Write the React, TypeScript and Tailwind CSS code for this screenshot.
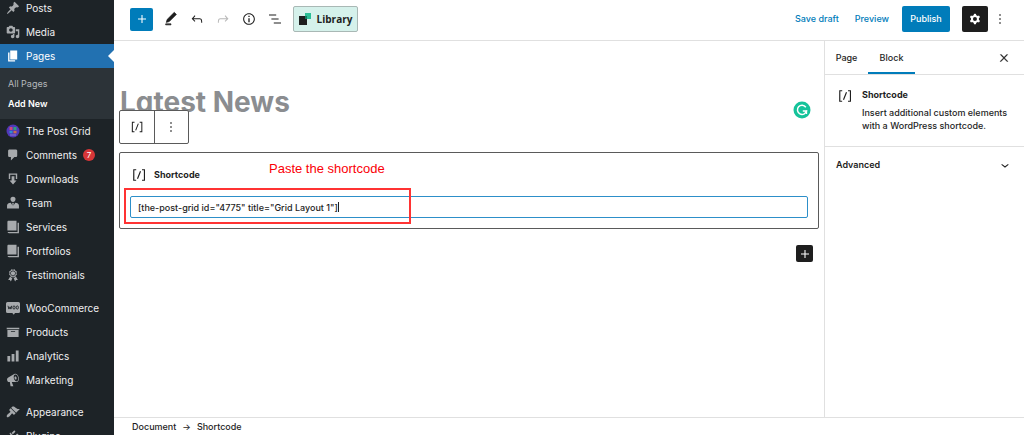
import type { ReactNode } from 'react';
import clsx from 'clsx';

const dashicons = {
  post: 'M10.44 3.02l1.82-1.82 6.36 6.35-1.83 1.82c-1.05-.68-2.48-.57-3.41.36l-.75.75c-.92.93-1.04 2.35-.35 3.41l-1.83 1.82-2.41-2.41-2.8 2.79c-.42.42-3.38 2.71-3.8 2.29s1.86-3.39 2.28-3.81l2.79-2.79L4.1 9.36l1.83-1.82c1.05.69 2.48.57 3.4-.36l.75-.75c.93-.92 1.05-2.35.36-3.41z',
  media: 'M13 11V4c0-.55-.45-1-1-1h-1.67L9 1H5L3.67 3H2c-.55 0-1 .45-1 1v7c0 .55.45 1 1 1h10c.55 0 1-.45 1-1zM7 4.5c1.38 0 2.5 1.12 2.5 2.5S8.38 9.5 7 9.5 4.5 8.38 4.5 7 5.62 4.5 7 4.5zM14 6h5v10.5c0 1.38-1.12 2.5-2.5 2.5S14 17.88 14 16.5s1.12-2.5 2.5-2.5c.17 0 .34.02.5.05V9h-3V6zm-4 8.05V13h2v3.5c0 1.38-1.12 2.5-2.5 2.5S7 17.88 7 16.5 8.12 14 9.5 14c.17 0 .34.02.5.05z',
  page: 'M6 15V2h10v13H6zm-1 1h8v2H3V5h2v11z',
  comments: 'M5 2h9c1.1 0 2 .9 2 2v7c0 1.1-.9 2-2 2h-2l-5 5v-5H5c-1.1 0-2-.9-2-2V4c0-1.1.9-2 2-2z',
  download: 'M14.01 4v6h2V2H4v8h2.01V4h8zm-2 2v6h3l-5 6-5-6h3V6h4z',
  team: 'M10 1a3.6 3.6 0 0 1 3.6 3.8c0 2-1.6 3.9-3.6 3.9S6.4 6.8 6.4 4.8A3.6 3.6 0 0 1 10 1zM1.5 18v-4.5c0-2.2 2.2-3.7 5.3-3.9L9.5 14l-.7-3.2.7-1h1l.7 1-.7 3.2 2.7-4.4c3.1.2 5.3 1.7 5.3 3.9V18z',
  book: 'M2 2.5C2 1.7 2.7 1 3.5 1H15v14H2zM16.5 4H18.5v15H4.5c-1 0-1.8-.6-2.2-1.5V17h14.2z',
  awards: 'M4.46 5.16L5 7.46l-.54 2.29 2.01 1.24L7.7 13l2.3-.54 2.3.54 1.23-2.01 2.01-1.24L15 7.46l.54-2.3-2-1.24-1.24-2.01-2.3.55-2.29-.54-1.25 2zm5.55 6.34c-2.21 0-4-1.79-4-4 0-2.2 1.79-4 4-4s4 1.8 4 4c0 2.21-1.79 4-4 4zm-.02-1C8.33 10.5 7 9.16 7 7.5c0-1.65 1.33-3 2.99-3S13 5.85 13 7.5c0 1.66-1.35 3-3.01 3zm3.84 1.1l-1.28 2.24-2.08-.47L13 19.2l1.4-2.2h2.5zm-7.7.07l1.25 2.25 2.13-.51L7 19.2 5.6 17H3.1z',
  archive: 'M19 4v2H1V4h18zM2 7h16v10H2V7zm11 3V9H7v1h6z',
  chart: 'M18 18V2h-4v16h4zm-6 0V7H8v11h4zm-6 0v-8H2v8h4z',
  megaphone: 'M18.15 5.94c.46 1.62.38 3.22-.02 4.48-.42 1.28-1.26 2.18-2.3 2.48-.16.06-.26.06-.4.06-.06.02-.12.02-.18.02-.06.02-.14.02-.22.02h-6.8l2.22 5.5c.02.14-.06.26-.14.34-.08.1-.24.16-.34.16H6.95c-.1 0-.26-.06-.34-.16-.08-.08-.16-.2-.14-.34l-1-5.5H4.25l-.02-.02c-.5.06-1.08-.18-1.54-.62s-.88-1.08-1.06-1.88c-.24-.8-.2-1.56-.02-2.2.18-.62.58-1.08 1.06-1.3l.02-.02 9-5.4c.1-.06.18-.1.24-.16.06-.04.14-.08.24-.12.16-.08.28-.12.5-.18 1.04-.3 2.24.1 3.22.98s1.84 2.24 2.26 3.86zm-2.58 5.98h-.02c.4-.1.74-.34 1.04-.7.58-.7.86-1.76.86-3.04 0-.64-.1-1.3-.28-1.98-.34-1.36-1.02-2.5-1.78-3.24s-1.68-1.1-2.46-.88c-.82.22-1.4.96-1.7 2-.32 1.04-.28 2.36.06 3.72.38 1.36 1 2.5 1.8 3.24.78.74 1.62 1.1 2.48.88zm-2.54-7.08c.22-.04.42-.02.62.04.38.16.76.48 1.02 1s.42 1.2.42 1.78c0 .3-.04.56-.12.8-.18.48-.44.84-.86.94-.34.1-.8-.06-1.14-.4s-.64-.86-.78-1.5c-.18-.62-.12-1.24.02-1.72s.48-.84.82-.94z',
  appearance: 'M14.48 11.06L7.41 3.99l1.5-1.5c.5-.56 2.3-.47 3.51.32 1.21.8 1.43 1.28 2.91 2.1 1.18.64 2.45 1.26 4.45.85zm-.71.71L6.7 4.7 4.93 6.47c-.39.39-.39 1.02 0 1.41l1.06 1.06c.39.39.39 1.03 0 1.42-.6.6-1.43 1.11-2.21 1.69-.35.26-.7.53-1.01.84C1.43 14.23.4 16.08 1.4 17.07c.99 1 2.84-.03 4.18-1.36.31-.31.58-.66.85-1.02.57-.78 1.08-1.61 1.69-2.21.39-.39 1.02-.39 1.41 0l1.06 1.06c.39.39 1.02.39 1.41 0z',
  plugins: 'M13.11 4.36L9.87 7.6 8 5.73l3.24-3.24c.35-.34 1.05-.2 1.56.32.52.51.66 1.21.31 1.55zm-8 1.77l.91-1.12 9.01 9.01-1.19.84c-.71.71-2.63 1.16-3.82 1.16H8.14L4.9 19.26c-.38.38-1.04.28-1.48-.16s-.54-1.1-.16-1.48l3.24-3.24v-1.88c0-1.19-.1-3.09-.39-4.37zm7.26 3.97l3.24-3.24c.34-.35 1.04-.21 1.55.31.52.51.66 1.21.31 1.55l-3.24 3.25z',
};

const editorIcons = {
  plus: 'M18 11.2h-5.2V6h-1.6v5.2H6v1.6h5.2V18h1.6v-5.2H18z',
  pencil: 'M20.1 5.1L16.9 2 6.2 12.7l-1.3 4.4 4.5-1.3L20.1 5.1zM4 20.8h8v-1.5H4v1.5z',
  undo: 'M18.3 11.7c-.6-.6-1.4-.9-2.3-.9H6.7l2.9-3.3-1.1-1-4.5 5L8.5 16l1-1-2.7-2.7H16c.5 0 .9.2 1.3.5 1 1 1 3.4 1 4.5v.3h1.5v-.2c0-1.5 0-4.3-1.5-5.7z',
  redo: 'M15.6 6.5l-1.1 1 2.9 3.3H8c-.9 0-1.7.3-2.3.9-1.4 1.5-1.4 4.2-1.4 5.6v.2h1.5v-.3c0-1.1 0-3.5 1-4.5.3-.3.7-.5 1.3-.5h9.2L14.5 15l1.1 1.1 4.6-4.6-4.6-5z',
  info: 'M12 3.2c-4.8 0-8.8 3.9-8.8 8.8 0 4.8 3.9 8.8 8.8 8.8 4.8 0 8.8-3.9 8.8-8.8 0-4.8-4-8.8-8.8-8.8zm0 16c-4 0-7.2-3.3-7.2-7.2C4.8 8 8 4.8 12 4.8s7.2 3.3 7.2 7.2c0 4-3.2 7.2-7.2 7.2zM11 17h2v-6h-2v6zm0-8h2V7h-2v2z',
  listView: 'M13.8 5.2H3v1.5h10.8V5.2zm-3.6 12v1.5H21v-1.5H10.2zm7.2-6H6.6v1.5h10.8v-1.5z',
  cog: 'M10.289 4.836A1 1 0 0111.275 4h1.306a1 1 0 01.987.836l.244 1.466c.787.26 1.503.679 2.108 1.218l1.393-.522a1 1 0 011.216.437l.653 1.13a1 1 0 01-.23 1.273l-1.148.944a6.025 6.025 0 010 2.435l1.149.946a1 1 0 01.23 1.272l-.653 1.13a1 1 0 01-1.216.437l-1.394-.522c-.605.54-1.32.958-2.108 1.218l-.244 1.466a1 1 0 01-.987.836h-1.306a1 1 0 01-.986-.836l-.244-1.466a5.995 5.995 0 01-2.108-1.218l-1.394.522a1 1 0 01-1.217-.436l-.653-1.131a1 1 0 01.23-1.272l1.149-.946a6.026 6.026 0 010-2.435l-1.148-.944a1 1 0 01-.23-1.272l.653-1.131a1 1 0 011.217-.437l1.393.522a5.994 5.994 0 012.108-1.218l.244-1.466zM14.929 12a3 3 0 11-6 0 3 3 0 016 0z',
  more: 'M13 19h-2v-2h2v2zm0-6h-2v-2h2v2zm0-6h-2V5h2v2z',
  shortcode: 'M16 4.2v1.5h2.5v12.5H16v1.5h4V4.2h-4zM4.2 19.8h4v-1.5H5.8V5.8h2.5V4.2h-4l-.1 15.6zm5.1-3.1l1.4.6 4-10-1.4-.6-4 10z',
  close: 'M13 11.8l6.1-6.3-1-1-6.1 6.2-6.1-6.2-1 1 6.1 6.3-6.5 6.7 1 1 6.5-6.6 6.5 6.6 1-1z',
  chevron: 'M17.5 11.6L12 16l-5.5-4.4.9-1.2L12 14l4.5-3.6 1 1.2z',
};

function Dashicon({ name }: { name: keyof typeof dashicons }) {
  return (
    <svg viewBox="0 0 20 20" className="w-3.5 h-3.5 fill-current" aria-hidden="true">
      <path fillRule="evenodd" d={dashicons[name]} />
    </svg>
  );
}

function Icon({ name, className = 'w-4 h-4' }: { name: keyof typeof editorIcons; className?: string }) {
  return (
    <svg viewBox="0 0 24 24" className={clsx('fill-current shrink-0', className)} aria-hidden="true">
      <path fillRule="evenodd" d={editorIcons[name]} />
    </svg>
  );
}

function PostGridLogo() {
  return (
    <svg viewBox="0 0 14 14" className="w-3.5 h-3.5" aria-hidden="true">
      <circle cx="7" cy="7" r="6.5" fill="#5138b8" />
      <rect x="3.5" y="3" width="3" height="3" fill="#d0497c" />
      <rect x="7.5" y="3" width="3" height="3" fill="#2ba27d" />
      <rect x="3.5" y="6.8" width="3" height="2.5" fill="#2f8fd0" />
      <rect x="7.5" y="6.8" width="3" height="2.5" fill="#c9704a" />
      <path d="M4 11h6" stroke="#9a8de0" strokeWidth=".8" />
    </svg>
  );
}

function WooLogo() {
  return (
    <svg viewBox="0 0 14 14" className="w-3.5 h-3.5" aria-hidden="true">
      <path d="M1.5 1h11A1.5 1.5 0 0 1 14 2.5v8a1.5 1.5 0 0 1-1.5 1.5H9l-1.2 1.8L6.3 12H1.5A1.5 1.5 0 0 1 0 10.5v-8A1.5 1.5 0 0 1 1.5 1z" fill="#a7aaad" />
      <path d="M2 4.8l.9 3.3 1.2-2.3.8 2.3.8-3.3" fill="none" stroke="#1d2327" strokeWidth=".9" />
      <ellipse cx="8" cy="6.5" rx="1.1" ry="1.6" fill="none" stroke="#1d2327" strokeWidth=".9" />
      <ellipse cx="11.3" cy="6.5" rx="1.1" ry="1.6" fill="none" stroke="#1d2327" strokeWidth=".9" />
    </svg>
  );
}

interface MenuItemProps {
  label: string;
  icon: ReactNode;
  current?: boolean;
  badge?: number;
}

function MenuItem({ label, icon, current, badge }: MenuItemProps) {
  return (
    <a
      href="#"
      aria-current={current ? 'page' : undefined}
      className={clsx(
        'relative flex h-6 items-center gap-1.5 pl-1.5 text-[10px]',
        current ? 'bg-[#2271b1] text-white' : 'text-[#f0f0f1]',
      )}
    >
      <span className={current ? 'text-white' : 'text-[#a7aaad]'}>{icon}</span>
      {label}
      {badge && (
        <span className="flex h-3 w-3 items-center justify-center rounded-full bg-[#d63638] text-[8px] text-white">
          {badge}
        </span>
      )}
      {current && (
        <span className="absolute right-0 top-1/2 -translate-y-1/2 border-y-6 border-r-6 border-y-transparent border-r-white" />
      )}
    </a>
  );
}

function Sidebar() {
  return (
    <nav aria-label="Main menu" className="w-[114px] shrink-0 overflow-hidden bg-[#1d2327]">
      <div className="-mt-1">
        <MenuItem label="Posts" icon={<Dashicon name="post" />} />
        <MenuItem label="Media" icon={<Dashicon name="media" />} />
        <MenuItem label="Pages" icon={<Dashicon name="page" />} current />
        <div className="flex flex-col bg-[#2c3338] pb-[5px] pl-2 pt-1.5 leading-5">
          <a href="#" className="text-[#b5b8bb]">All Pages</a>
          <a href="#" className="font-semibold text-white">Add New</a>
        </div>
        <MenuItem label="The Post Grid" icon={<PostGridLogo />} />
        <MenuItem label="Comments" icon={<Dashicon name="comments" />} badge={7} />
        <MenuItem label="Downloads" icon={<Dashicon name="download" />} />
        <MenuItem label="Team" icon={<Dashicon name="team" />} />
        <MenuItem label="Services" icon={<Dashicon name="book" />} />
        <MenuItem label="Portfolios" icon={<Dashicon name="book" />} />
        <MenuItem label="Testimonials" icon={<Dashicon name="awards" />} />
        <div className="h-[9px]" />
        <MenuItem label="WooCommerce" icon={<WooLogo />} />
        <MenuItem label="Products" icon={<Dashicon name="archive" />} />
        <MenuItem label="Analytics" icon={<Dashicon name="chart" />} />
        <MenuItem label="Marketing" icon={<Dashicon name="megaphone" />} />
        <div className="h-2" />
        <MenuItem label="Appearance" icon={<Dashicon name="appearance" />} />
        <MenuItem label="Plugins" icon={<Dashicon name="plugins" />} />
      </div>
    </nav>
  );
}

function Toolbar() {
  return (
    <header className="flex h-[41px] shrink-0 items-center justify-between border-b border-[#e0e0e0] px-4 pb-0.5">
      <div className="flex items-center">
        <button aria-label="Add block" className="mr-2.5 flex h-[23px] w-[23px] items-center justify-center rounded-xs bg-[#007cba] text-white">
          <Icon name="plus" />
        </button>
        <div className="mr-2.5 flex items-center gap-2.5">
          <button aria-label="Tools"><Icon name="pencil" className="w-4 h-4 stroke-current" /></button>
          <button aria-label="Undo"><Icon name="undo" /></button>
          <button aria-label="Redo" disabled className="text-[#b8b8b8]"><Icon name="redo" /></button>
          <button aria-label="Details"><Icon name="info" /></button>
          <button aria-label="List view"><Icon name="listView" /></button>
        </div>
        <button className="flex h-[26px] w-[65px] items-center justify-center gap-1.5 rounded-xs border border-[#a9b8b5] bg-[#d5f1eb] font-['Open_Sans',sans-serif] text-[10px] font-bold">
          <svg viewBox="0 0 12 12" className="w-3 h-3" aria-hidden="true">
            <path d="M0 3h8v9H0z" fill="#1e1e1e" />
            <path d="M6 0h6v6H6z" fill="#2bbf96" />
            <path d="M6 3h2v3H6z" fill="#147a60" />
          </svg>
          Library
        </button>
      </div>
      <div className="flex items-center">
        <button className="mr-4 text-[#007cba]">Save draft</button>
        <button className="mr-[13px] text-[#007cba]">Preview</button>
        <button className="mr-3 h-[26px] w-12 rounded-xs bg-[#007cba] text-white">Publish</button>
        <button aria-label="Settings" className="mr-1 flex h-[26px] w-[26px] items-center justify-center rounded-xs bg-[#1e1e1e] text-white">
          <Icon name="cog" />
        </button>
        <button aria-label="Options"><Icon name="more" /></button>
      </div>
    </header>
  );
}

function ShortcodeBlock() {
  return (
    <section className="relative rounded-xs border border-[#5a5a5a] px-2.5 pb-2.5 pt-[13px]">
      {/* Floating block toolbar */}
      <div className="absolute -left-px -top-[43px] flex h-[34px] w-[70px] divide-x divide-[#5a5a5a] rounded-xs border border-[#5a5a5a] bg-white">
        <button aria-label="Shortcode" className="flex flex-1 items-center justify-center"><Icon name="shortcode" /></button>
        <button aria-label="Options" className="flex flex-1 items-center justify-center"><Icon name="more" /></button>
      </div>

      <label htmlFor="shortcode" className="flex items-center gap-1.5 font-bold">
        <Icon name="shortcode" className="w-[18px] h-[18px]" />
        Shortcode
      </label>
      <div className="relative mt-3">
        <input
          id="shortcode"
          type="text"
          defaultValue={'[the-post-grid id="4775" title="Grid Layout 1"]'}
          className="block h-[22px] w-full rounded-xs border border-[#2d8fc9] px-[7px] font-medium outline-none"
        />
        {/* Text caret */}
        <span className="absolute left-52 top-1.5 h-2.5 w-px bg-[#1e1e1e]" />
      </div>

      {/* Annotation */}
      <p className="absolute left-[149px] top-2 font-['Liberation_Sans',Arial,sans-serif] text-[13px] font-normal leading-4 text-[#fb0007]">
        Paste the shortcode
      </p>
      <div className="pointer-events-none absolute left-1 top-[35px] h-9 w-[287px] border-2 border-[#f33]" />
    </section>
  );
}

function Canvas() {
  return (
    <main className="min-w-0 flex-1 px-[5px] pt-[43px]">
      <div className="flex items-center justify-between pl-px pr-2">
        <h1 className="text-[28px] font-bold leading-9 text-[#8b8d90] [font-feature-settings:'cv11']">
          Latest News
        </h1>
        <svg viewBox="0 0 18 18" className="mt-4 w-[18px] h-[18px]" aria-hidden="true">
          <circle cx="9" cy="9" r="8.5" fill="#15c39a" />
          <path d="M12.8 6.2A4.6 4.6 0 1 0 13.5 10H9.8" fill="none" stroke="#fff" strokeWidth="1.5" />
          <path d="M13.5 9.5V13" stroke="#fff" strokeWidth="1.3" />
        </svg>
      </div>
      <div className="mt-8">
        <ShortcodeBlock />
      </div>
      <div className="mt-4 flex justify-end pr-1.5">
        <button aria-label="Add block" className="flex h-[17px] w-[17px] items-center justify-center rounded-xs bg-[#1e1e1e] text-white">
          <Icon name="plus" />
        </button>
      </div>
    </main>
  );
}

function SettingsPanel() {
  return (
    <aside className="w-[200px] shrink-0 border-l border-[#e0e0e0]">
      <div className="flex h-[34px] items-stretch border-b border-[#e0e0e0]">
        <button className="w-[43px]">Page</button>
        <button className="w-[47px] border-b-2 border-[#007cba] pt-0.5">Block</button>
        <button aria-label="Close settings" className="ml-auto mr-3.5">
          <Icon name="close" className="w-3 h-3 stroke-current" />
        </button>
      </div>
      <div className="flex gap-2 border-b border-[#e0e0e0] px-[11px] pb-3.5 pt-3">
        <Icon name="shortcode" className="w-[18px] h-[18px]" />
        <div>
          <h2 className="mb-[3px] font-bold leading-4">Shortcode</h2>
          <p className="leading-[13px]">Insert additional custom elements with a WordPress shortcode.</p>
        </div>
      </div>
      <button className="flex w-full items-center justify-between px-[11px] py-2.5 font-semibold">
        Advanced
        <Icon name="chevron" />
      </button>
    </aside>
  );
}

export default function App() {
  return (
    <div className="flex h-screen overflow-hidden bg-white font-[Inter,sans-serif] text-[9px] leading-4 text-[#1e1e1e]">
      <Sidebar />
      <div className="flex min-w-0 flex-1 flex-col font-medium">
        <Toolbar />
        <div className="flex min-h-0 flex-1">
          <Canvas />
          <SettingsPanel />
        </div>
        <footer className="flex h-[18px] shrink-0 items-center gap-1.5 border-t border-[#e0e0e0] pl-[18px]">
          <a href="#">Document</a>
          <span aria-hidden="true">→</span>
          <span>Shortcode</span>
        </footer>
      </div>
    </div>
  );
}
